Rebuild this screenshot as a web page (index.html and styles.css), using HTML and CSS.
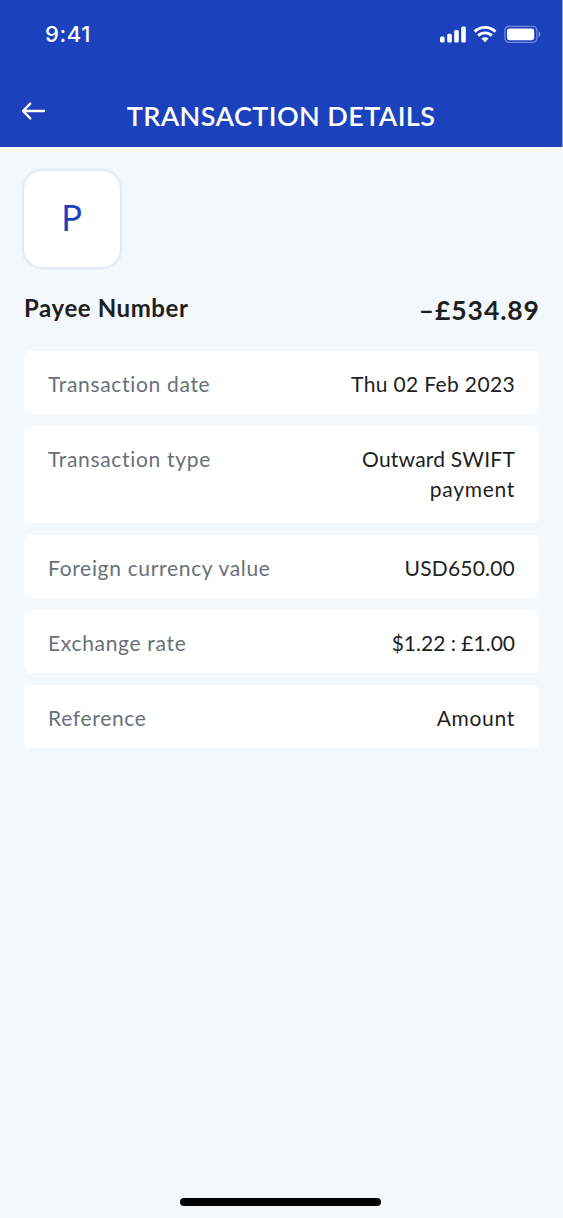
FILE: index.html
```html
<!DOCTYPE html>
<html lang="en">
<head>
<meta charset="utf-8">
<title>Transaction details</title>
<link rel="stylesheet" href="styles.css">
</head>
<body>
<div class="screen">
  <header class="header">
    <div class="status">
      <span class="time">9:41</span>
      <svg class="status-icons" width="102" height="18" viewBox="0 0 102 18">
        <g fill="#fff">
          <rect x="0" y="11.5" width="4.6" height="6" rx="1.5"/>
          <rect x="7.2" y="8.7" width="4.6" height="8.8" rx="1.5"/>
          <rect x="14.2" y="5" width="4.6" height="12.5" rx="1.5"/>
          <rect x="21.2" y="1.4" width="4.6" height="16.1" rx="1.5"/>
        </g>
        <g fill="none" stroke="#fff" stroke-width="2.9">
          <path d="M34.6 6.6a15 15 0 0 1 20.8 0"/>
          <path d="M38.2 10.6a9.8 9.8 0 0 1 13.6 0"/>
        </g>
        <path fill="#fff" d="M41.4 13.6a5.3 5.3 0 0 1 7.2 0L45 17.3z"/>
        <rect x="64.9" y="1.3" width="32" height="16" rx="4.2" fill="none" stroke="#fff" stroke-opacity=".38" stroke-width="1.3"/>
        <rect x="67" y="3.4" width="27.2" height="11.8" rx="2.4" fill="#fff"/>
        <path fill="#fff" fill-opacity=".45" d="M98.6 6.5v5.6a3 3 0 0 0 0-5.6z"/>
      </svg>
    </div>
    <div class="title-bar">
      <svg class="back" width="26" height="22" viewBox="0 0 26 22" fill="none" stroke="#fff" stroke-width="2.4" stroke-linecap="round" stroke-linejoin="round">
        <path d="M23 11H2M9.3 3.6L2 11l7.3 7.4"/>
      </svg>
      <h1 class="title">TRANSACTION DETAILS</h1>
    </div>
  </header>
  <main class="content">
    <div class="avatar">P</div>
    <div class="summary">
      <span class="payee">Payee Number</span>
      <span class="amount">–£534.89</span>
    </div>
    <dl class="details">
      <div class="row"><dt class="label">Transaction date</dt><dd class="value">Thu 02 Feb 2023</dd></div>
      <div class="row tall"><dt class="label">Transaction type</dt><dd class="value"><span class="value-snug">Outward SWIFT</span><br><span class="value-wide">payment</span></dd></div>
      <div class="row"><dt class="label">Foreign currency value</dt><dd class="value value-snug">USD650.00</dd></div>
      <div class="row"><dt class="label">Exchange rate</dt><dd class="value value-tight">$1.22 : £1.00</dd></div>
      <div class="row"><dt class="label">Reference</dt><dd class="value value-wide">Amount</dd></div>
    </dl>
  </main>
  <div class="home-bar"></div>
</div>
</body>
</html>
```
FILE: styles.css
```css
* { box-sizing: border-box; }
body { margin: 0; background: #f4f8fb; font-family: Lato, "Liberation Sans", sans-serif; color: #1d1f22; }
.screen { height: 1218px; display: flex; flex-direction: column; }
.header { height: 147px; background: #1b42bc; color: #fff; border-right: 1px solid #8da0dd; }
.status { display: flex; justify-content: space-between; align-items: center; height: 68px; padding: 0 20px 0 45px; }
.time { font: 500 22px/28px Inter, sans-serif; letter-spacing: 0.6px; }
.title-bar { display: grid; grid-template-columns: 26px 1fr 26px; padding: 32px 21px 0; }
.back { display: block; }
.title { margin: 0; font-size: 27px; line-height: 32px; font-weight: 600; text-align: center; white-space: nowrap; letter-spacing: 0.4px; }
.content { flex: 1; padding: 24px 24px 0; }
.avatar { width: 96px; height: 96px; border-radius: 18px; background: #fff; box-shadow: 0 0 4px rgba(27, 50, 120, .2); color: #1b42bc; font: 400 36px/94px "Noto Sans", sans-serif; text-align: center; }
.summary { display: flex; justify-content: space-between; align-items: center; height: 84px; }
.payee { padding-bottom: 3px; font-size: 24px; font-weight: 700; letter-spacing: 0.6px; }
.amount { padding-top: 1px; font-size: 26.5px; font-weight: 700; letter-spacing: 0.9px; margin-right: -0.9px; }
.details { margin: 0; display: flex; flex-direction: column; gap: 12px; }
.row { height: 63px; display: flex; justify-content: space-between; padding: 18px 24px 0; background: #fff; border-radius: 6px; font-size: 21px; line-height: 30px; }
.tall { height: 97px; }
.label { color: #697079; letter-spacing: 0.68px; }
.value { margin: 0; text-align: right; letter-spacing: 0.35px; }
.value-tight { letter-spacing: 0; }
.value-snug { letter-spacing: 0.2px; }
.value-wide { letter-spacing: 0.7px; }
.home-bar { width: 201px; height: 8px; margin: 0 0 12px 180px; border-radius: 4px; background: #000; }
```
